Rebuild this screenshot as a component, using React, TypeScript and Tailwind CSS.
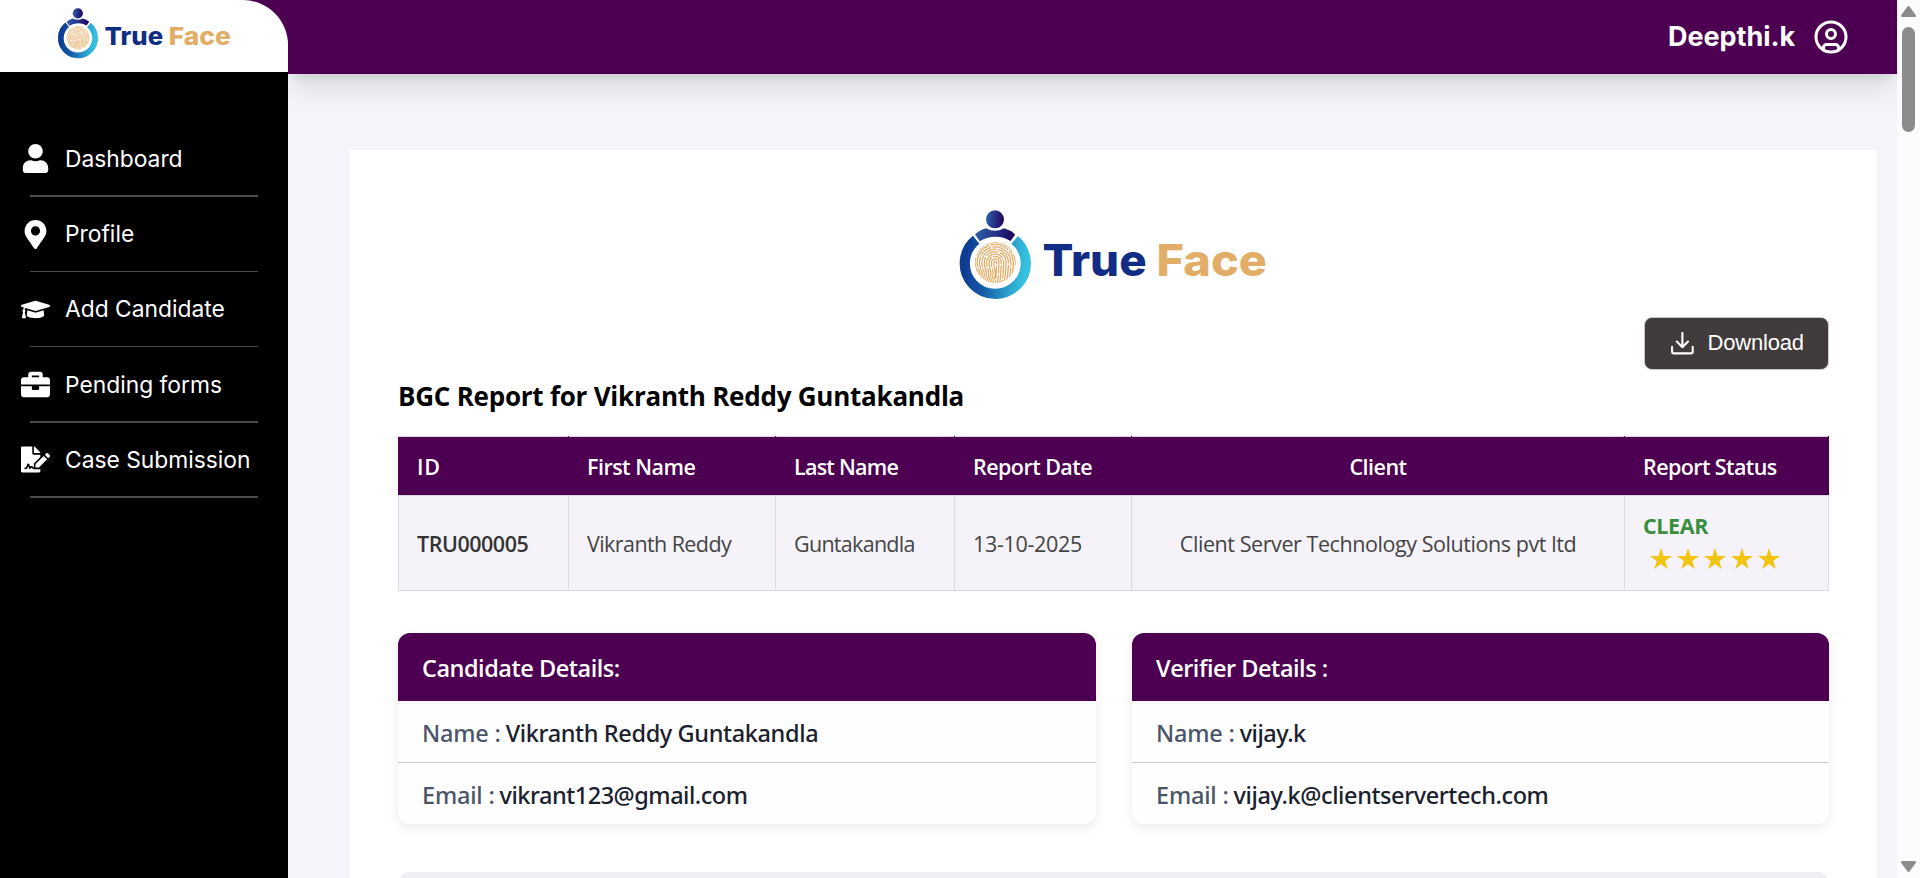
import React from "react";
import type { ReactNode } from "react";
import { FaUser, FaMapMarkerAlt, FaGraduationCap, FaBriefcase, FaFileSignature } from "react-icons/fa";
import { LuCircleUser } from "react-icons/lu";

const RIDGES = [1.3, 3.7, 6.1, 8.5, 10.9, 13.3, 15.7, 18.1, 20.2];

function Logo({ id, className }: { id: string; className: string }) {
  return (
    <svg viewBox="0 0 310 92" className={className} role="img" aria-label="True Face">
      <defs>
        <linearGradient id={`${id}-ring`} x1="0" y1="0.4" x2="1" y2="0.5">
          <stop offset="0" stopColor="#0e3b94" />
          <stop offset="0.35" stopColor="#155ba8" />
          <stop offset="0.75" stopColor="#2a9fcc" />
          <stop offset="1" stopColor="#35c2df" />
        </linearGradient>
        <linearGradient id={`${id}-body`} x1="0" y1="0" x2="1" y2="0.1">
          <stop offset="0" stopColor="#2f66ae" />
          <stop offset="1" stopColor="#1d0763" />
        </linearGradient>
        <clipPath id={`${id}-clip`}>
          <circle cx="37.3" cy="54.6" r="20.4" />
        </clipPath>
      </defs>
      <path d="M18.1 31.7 A30.5 30.5 0 1 0 56.7 31.9" fill="none" stroke={`url(#${id}-ring)`} strokeWidth="10.2" />
      <circle cx="37" cy="11.3" r="9" fill={`url(#${id}-body)`} />
      <path
        d="M17 26.6 Q22 21.6 28 20.3 Q32.5 22.8 37 22.8 Q41.5 22.8 46 20.3 Q52 21.8 57.2 26.4 L52.6 33 Q45.5 28.6 37.3 28.7 Q29 28.6 21.8 33.3 Z"
        fill={`url(#${id}-body)`}
      />
      <g clipPath={`url(#${id}-clip)`} fill="none" stroke="#e3ad68" strokeWidth="1.3">
        {RIDGES.map((r, i) => (
          <path
            key={r}
            d={`M${33 - r * 0.9} 78 Q${41 - r * 0.9} 68 ${37.4 - r * 0.93} ${60 + r * 0.1} Q${37.2 - r} 57 ${37.2 - r} 54.5 A${r} ${r} 0 0 1 ${37.2 + r} 54.5 Q${37.2 + r} 64 ${36 + r * 0.9} 78`}
            strokeDasharray={i % 2 ? "19 1.4 27 1.4" : "31 1.4 13 1.4"}
          />
        ))}
      </g>
      <g className="font-['Inter',sans-serif] text-[44px] font-extrabold">
        <text x="84.6" y="68" textLength="104" lengthAdjust="spacingAndGlyphs" fill="#112c84">True</text>
        <text x="198.5" y="68" textLength="110.5" lengthAdjust="spacingAndGlyphs" fill="#e2ae67">Face</text>
      </g>
    </svg>
  );
}

const NAV = [
  { label: "Dashboard", icon: <FaUser />, row: "h-[73px]", line: "h-[2px]", text: "pt-[2px]" },
  { label: "Profile", icon: <FaMapMarkerAlt />, row: "h-[74px]", line: "h-px", text: "pt-0" },
  { label: "Add Candidate", icon: <FaGraduationCap />, row: "h-[74px]", line: "h-px", text: "pt-0" },
  { label: "Pending forms", icon: <FaBriefcase />, row: "h-[74px]", line: "h-[2px]", text: "pt-[2px]" },
  { label: "Case Submission", icon: <FaFileSignature />, row: "h-[73px]", line: "h-[2px]", text: "pt-[2px]" },
];

function Sidebar() {
  return (
    <aside className="z-20 flex w-72 shrink-0 flex-col bg-black">
      <div className="h-[72px] bg-[#4d0051]">
        <div className="h-full rounded-tr-[45px] bg-white pl-[56.7px] pt-[7.4px]">
          <Logo id="nav" className="h-[51.8px] w-[174.5px]" />
        </div>
      </div>
      <nav className="pt-[50px]">
        {NAV.map((n) => (
          <div key={n.label}>
            <a className={`flex items-center pl-[21px] text-white ${n.row}`}>
              <span className="w-[29px] text-[29px]">{n.icon}</span>
              <span className={`pl-[15px] font-['Inter',sans-serif] text-[22.8px] leading-none ${n.text}`}>{n.label}</span>
            </a>
            <div className={`ml-[30px] w-[228px] bg-[#4a4a4a] ${n.line}`} />
          </div>
        ))}
      </nav>
    </aside>
  );
}

function DownloadIcon() {
  return (
    <svg viewBox="0 0 23 23" className="size-[23px]" fill="none" stroke="white" strokeWidth="2.1" strokeLinecap="round" strokeLinejoin="round">
      <path d="M1.1 14.8v5.3a1.3 1.3 0 0 0 1.3 1.3h18a1.3 1.3 0 0 0 1.3-1.3v-5.3" />
      <path d="M11.4 1v14M5.8 9.6l5.6 5.6 5.6-5.6" />
    </svg>
  );
}

function Star() {
  return (
    <svg viewBox="0 0 22 21" className="h-[21px] w-[22px]" fill="#f1c40f">
      <path d="M11 0l2.6 8H22l-6.8 4.9 2.6 8.1L11 16l-6.8 5 2.6-8.1L0 8h8.4z" />
    </svg>
  );
}

const TH = "border-x border-x-[#4d0051] border-y border-y-[#ddd9e4] pt-px px-[18px] font-semibold";
const TD = "border border-[#ddd9e4] px-[18px] pt-[2px]";

function ReportTable() {
  return (
    <table className="mt-5 w-[1431px] table-fixed border-collapse border border-[#ddd9e4] font-['Open_Sans',sans-serif] text-[21.5px] leading-none">
      <colgroup>
        <col className="w-[170px]" />
        <col className="w-[207px]" />
        <col className="w-[179px]" />
        <col className="w-[177px]" />
        <col className="w-[493px]" />
        <col className="w-[204px]" />
      </colgroup>
      <thead>
        <tr className="h-[59px] bg-[#4d0051] text-white">
          <th className={`${TH} text-left tracking-[0.6px]`}>ID</th>
          <th className={`${TH} text-left tracking-[-0.52px]`}>First Name</th>
          <th className={`${TH} text-left tracking-[-0.75px]`}>Last Name</th>
          <th className={`${TH} text-left tracking-[-0.55px]`}>Report Date</th>
          <th className={`${TH} text-center tracking-[-0.53px]`}>Client</th>
          <th className={`${TH} text-left tracking-[-0.6px]`}>Report Status</th>
        </tr>
      </thead>
      <tbody>
        <tr className="h-[95px] bg-[#f5f3f9] text-[#444]">
          <td className={`${TD} font-semibold tracking-[-0.48px] text-[#333]`}>TRU000005</td>
          <td className={`${TD} tracking-[-0.58px]`}>Vikranth Reddy</td>
          <td className={`${TD} tracking-[-0.71px]`}>Guntakandla</td>
          <td className={`${TD} tracking-[-0.32px]`}>13-10-2025</td>
          <td className={`${TD} text-center tracking-[-0.43px]`}>Client Server Technology Solutions pvt ltd</td>
          <td className="border border-[#ddd9e4] px-[18px] pb-[5px]">
            <div className="font-bold leading-[28px] tracking-[-0.38px] text-[#388e3c]">CLEAR</div>
            <div className="flex gap-[5px] pl-[7px] pt-[8px]">
              {[0, 1, 2, 3, 4].map((s) => (
                <Star key={s} />
              ))}
            </div>
          </td>
        </tr>
      </tbody>
    </table>
  );
}

function DetailRow({ label, className, children }: { label: string; className: string; children: ReactNode }) {
  return (
    <div className={`flex items-center gap-[5px] pl-[24px] pt-[5px] text-[23.5px] font-medium leading-none text-[#1a202c] ${className}`}>
      <span className="tracking-[-0.2px] text-[#4a5568]">{label}</span>
      {children}
    </div>
  );
}

function DetailCard({ title, name, email, width }: { title: string; name: ReactNode; email: ReactNode; width: string }) {
  return (
    <section className={`overflow-hidden rounded-xl bg-[#fefefe] font-['Noto_Sans',sans-serif] shadow-[0_4px_12px_rgba(0,0,0,0.08)] ${width}`}>
      <h3 className="flex h-[68px] items-center bg-[#4d0051] pl-6 pt-[4px] font-['Open_Sans',sans-serif] text-[23.5px] font-semibold leading-none tracking-[-0.49px] text-white">{title}</h3>
      <DetailRow label="Name :" className="h-[62px] border-b border-[#ccc]">{name}</DetailRow>
      <DetailRow label="Email :" className="h-[61px]">{email}</DetailRow>
    </section>
  );
}

function Scrollbar() {
  return (
    <div className="flex w-[23px] shrink-0 flex-col items-center bg-[#fcfcfc] pt-[6px] pb-[6px]">
      <svg viewBox="0 0 15 11" className="h-[11px] w-[15px]" fill="#8b8b8b">
        <path d="M6.3.8a1.5 1.5 0 0 1 2.4 0l6 8.2a1.2 1.2 0 0 1-1 2H1.3a1.2 1.2 0 0 1-1-2z" />
      </svg>
      <div className="mt-[10px] h-[105px] w-[13px] rounded-full bg-[#8b8b8b]" />
      <svg viewBox="0 0 15 11" className="mt-auto h-[11px] w-[15px] rotate-180" fill="#8b8b8b">
        <path d="M6.3.8a1.5 1.5 0 0 1 2.4 0l6 8.2a1.2 1.2 0 0 1-1 2H1.3a1.2 1.2 0 0 1-1-2z" />
      </svg>
    </div>
  );
}

export default function App() {
  return (
    <div className="flex h-screen w-full overflow-hidden bg-[#f4f5fa]">
      <Sidebar />
      <div className="flex min-w-0 grow flex-col overflow-hidden">
        <header className="z-10 flex h-[74px] shrink-0 items-center justify-end bg-[#4d0051] pr-12 text-white shadow-xl">
          <span className="pb-[2px] font-['Inter',sans-serif] text-[27px] font-bold leading-none tracking-[-0.06px]">Deepthi.k</span>
          <LuCircleUser className="ml-[18px] size-9" />
        </header>
        <main className="grow overflow-hidden pl-[62px] pr-5 pt-[76px]">
          <div className="flex min-h-[900px] flex-col bg-white px-12 pt-[58px]">
            <Logo id="report" className="ml-[560px] h-[92px] w-[310px] shrink-0" />
            <button className="mt-[17px] flex h-[53px] w-[185px] shrink-0 items-center self-end rounded-lg border border-[#c9c7c7] bg-[#413c3b] pl-[26px] text-white">
              <DownloadIcon />
              <span className="pb-[2px] pl-[13.5px] font-['Liberation_Sans',Arial,sans-serif] text-[22px] leading-none tracking-[-0.2px]">Download</span>
            </button>
            <h2 className="mt-1.5 font-['Open_Sans',sans-serif] text-[26px] font-bold leading-10 tracking-[-0.24px] text-black">
              BGC Report for Vikranth Reddy Guntakandla
            </h2>
            <ReportTable />
            <div className="mt-[42px] flex gap-9">
              <DetailCard
                width="w-[698px]"
                title="Candidate Details:"
                name={<span className="tracking-[-0.37px]">Vikranth Reddy Guntakandla</span>}
                email={<span className="tracking-[-0.48px]">vikrant123@gmail.com</span>}
              />
              <DetailCard
                width="w-[697px]"
                title="Verifier Details :"
                name={<span className="tracking-[-0.5px]">vijay.k</span>}
                email={<span className="tracking-[-0.4px]">vijay.k@clientservertech.com</span>}
              />
            </div>
            <div className="mt-12 h-20 shrink-0 rounded-xl bg-[#eff0f5]" />
          </div>
        </main>
      </div>
      <Scrollbar />
    </div>
  );
}
